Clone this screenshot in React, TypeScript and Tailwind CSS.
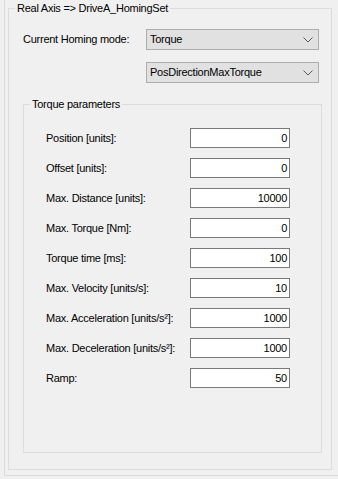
const rows = [
  { label: 'Position [units]:', value: '0' },
  { label: 'Offset [units]:', value: '0' },
  { label: 'Max. Distance [units]:', value: '10000' },
  { label: 'Max. Torque [Nm]:', value: '0' },
  { label: 'Torque time [ms]:', value: '100' },
  { label: 'Max. Velocity [units/s]:', value: '10' },
  { label: 'Max. Acceleration [units/s²]:', value: '1000' },
  { label: 'Max. Deceleration [units/s²]:', value: '1000' },
  { label: 'Ramp:', value: '50' },
];

function Combo({ value }: { value: string }) {
  return (
    <div className="w-[173px] h-[21px] bg-[#e1e1e1] border border-[#adadad] flex items-center justify-between pl-[3px] pr-[4px]">
      <span>{value}</span>
      <svg width="10" height="6" viewBox="0 0 10 6" className="mr-[1px]">
        <path d="M0.5 0.5 L5 5 L9.5 0.5" fill="none" stroke="#5a5a5a" strokeWidth="1" />
      </svg>
    </div>
  );
}

export default function App() {
  return (
    <div
      className="w-[338px] h-[479px] bg-[#f0f0f0] text-black text-[11px] tracking-[-0.25px] overflow-hidden"
      style={{ fontFamily: '"Liberation Sans", Arial, sans-serif' }}
    >
      <div className="ml-[4px] h-[476px] border-l border-b border-[#dcdcdc]">
        {/* äußere Gruppe */}
        <fieldset className="ml-[3px] w-[324px] h-[470px] border border-[#dcdcdc]">
          <legend className="ml-[6px] px-[2px] leading-[16px]">Real Axis =&gt; DriveA_HomingSet</legend>

          <div className="flex pl-[14px] mt-[13px]">
            <div className="w-[123px] h-[21px] flex items-center">Current Homing mode:</div>
            <div className="flex flex-col gap-[12px]">
              <Combo value="Torque" />
              <Combo value="PosDirectionMaxTorque" />
            </div>
          </div>

          <fieldset className="ml-[14px] mt-[13px] w-[299px] h-[357px] border border-[#dcdcdc]">
            <legend className="ml-[6px] px-[2px] leading-[16px]">Torque parameters</legend>
            <div className="flex flex-col gap-[10px] pt-[16px] pl-[22px]">
              {rows.map((r) => (
                <div key={r.label} className="flex items-center h-[20px]">
                  <div className="w-[144px]">{r.label}</div>
                  <div className="w-[100px] h-[20px] bg-white border border-[#7a7a7a] flex items-center justify-end pr-[2px]">
                    {r.value}
                  </div>
                </div>
              ))}
            </div>
          </fieldset>
        </fieldset>
      </div>
    </div>
  );
}
